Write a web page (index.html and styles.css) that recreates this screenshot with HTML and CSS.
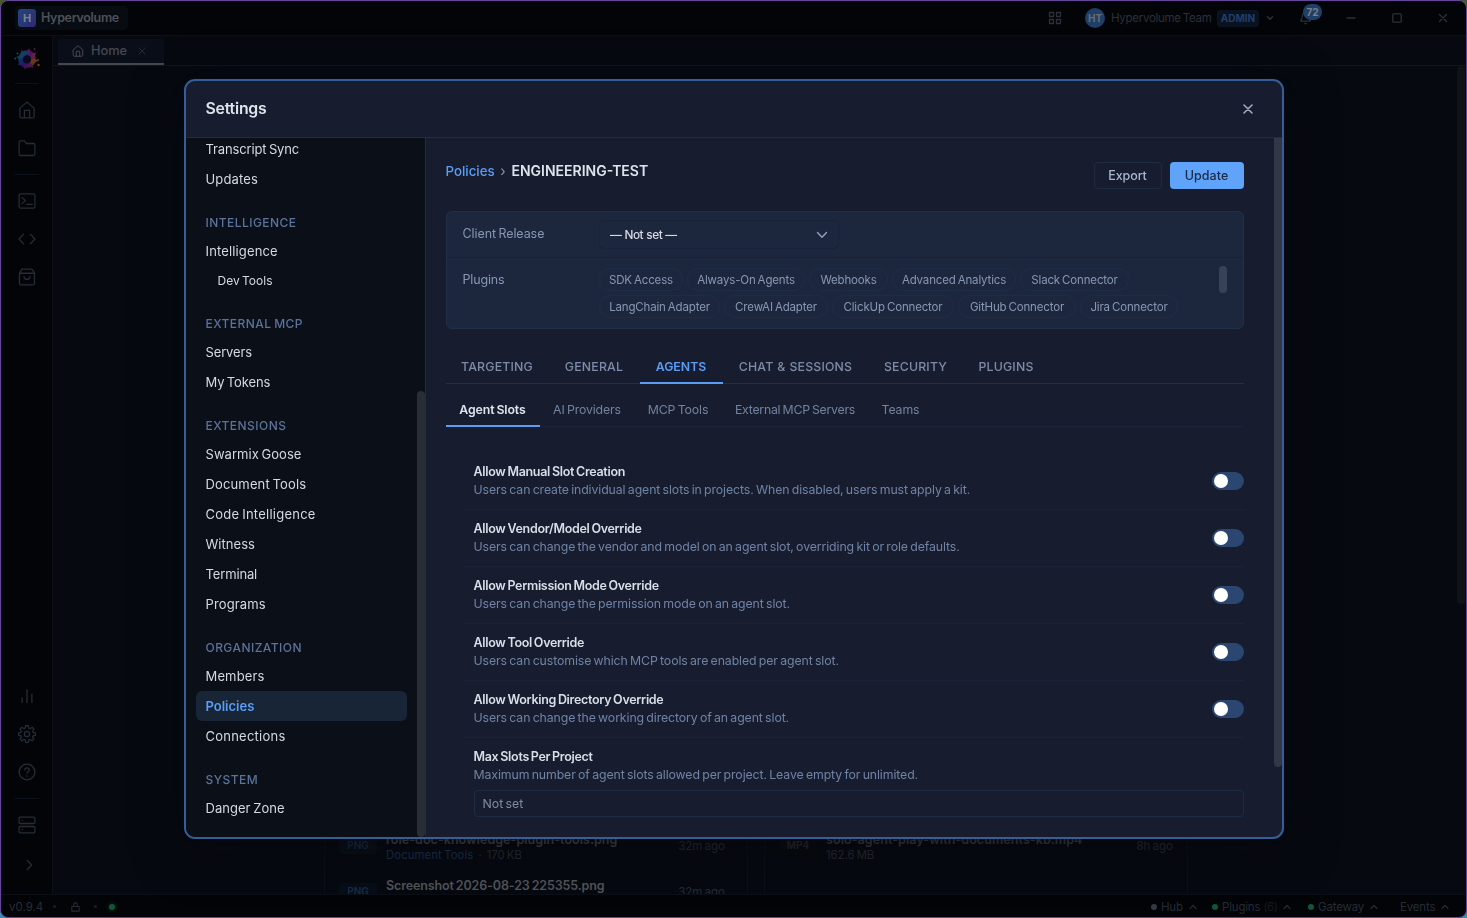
FILE: index.html
```html
<!DOCTYPE html>
<html lang="en">
<head>
<meta charset="utf-8">
<title>Hypervolume - Settings</title>
<link rel="stylesheet" href="styles.css">
</head>
<body>
<div class="window">
  <header class="titlebar">
    <div class="brand"><span class="brand-mark">H</span><span class="brand-name">Hypervolume</span></div>
    <div class="title-tools">
      <svg class="ic grid-ic" viewBox="0 0 14 14"><path d="M1.500 1.500h4v4h-4zM8.500 1.500h4v4h-4zM1.500 8.500h4v4h-4zM8.500 8.500h4v4h-4z"/></svg>
      <span class="avatar">HT</span>
      <span class="team">Hypervolume Team</span>
      <span class="admin">ADMIN</span>
      <svg class="ic chev-ic" viewBox="0 0 8 8"><path d="M1.500 2.800 4 5.200l2.500-2.400"/></svg>
      <span class="bell">
        <svg class="ic bell-ic" viewBox="0 0 24 24"><path d="M10.300 21a2 2 0 0 0 3.400 0M3.300 15.300A1 1 0 0 0 4 17h16a1 1 0 0 0 .7-1.700C19.400 14 18 12.500 18 8A6 6 0 0 0 6 8c0 4.500-1.400 6-2.700 7.300"/></svg>
        <span class="count">72</span>
      </span>
      <svg class="ic min-ic" viewBox="0 0 10 10"><path d="M1 5h8"/></svg>
      <svg class="ic max-ic" viewBox="0 0 10 10"><rect x=".8" y=".8" width="8.400" height="8.400" rx="1"/></svg>
      <svg class="ic close-ic" viewBox="0 0 10 10"><path d="m1.500 1.500 7 7M8.500 1.500l-7 7"/></svg>
    </div>
  </header>

  <div class="middle">
    <aside class="rail">
      <svg class="logo" viewBox="0 0 26 26">
        <defs><path id="blade" d="M16 9.500C11 10 6 9 7 3.500c1 1.500 2 1.500 4 1 3.500-1 7 1 8.500 5z"/></defs>
        <use href="#blade" fill="#3d1668"/>
        <use href="#blade" fill="#501660" transform="rotate(45 13 13)"/>
        <use href="#blade" fill="#621f40" transform="rotate(90 13 13)"/>
        <use href="#blade" fill="#6a3818" transform="rotate(135 13 13)"/>
        <use href="#blade" fill="#4c1648" transform="rotate(180 13 13)"/>
        <use href="#blade" fill="#34145e" transform="rotate(225 13 13)"/>
        <use href="#blade" fill="#152a64" transform="rotate(270 13 13)"/>
        <use href="#blade" fill="#10405c" transform="rotate(315 13 13)"/>
        <circle cx="13" cy="13.500" r="4" fill="#0a0828"/>
        <g fill="#125060"><circle cx="1.200" cy="12.500" r="1"/><circle cx="3.500" cy="7.500" r="1"/></g>
        <g fill="#7a4018"><circle cx="24" cy="14" r=".9"/><circle cx="24.500" cy="19" r="1.200"/></g>
        <circle cx="20.500" cy="3" r="1" fill="#5c1448"/>
      </svg>
      <hr class="rule r1">
      <svg class="ic ri home" viewBox="0 0 24 24"><path d="M2.500 9.500 12 1.500l9.500 8V20.500a2 2 0 0 1-2 2h-15a2 2 0 0 1-2-2zM8.500 22.500V12.500h7v10"/></svg>
      <svg class="ic ri folder" viewBox="0 0 24 24"><path d="M3.500 2.500h5l2.500 3.500h9.500a2 2 0 0 1 2 2v12a2 2 0 0 1-2 2h-17a2 2 0 0 1-2-2v-15.500a2 2 0 0 1 2-2z"/></svg>
      <hr class="rule r2">
      <svg class="ic ri term" viewBox="0 0 24 24"><rect x="1.500" y="2.500" width="21" height="19" rx="2"/><path d="m5.500 7.500 4.500 4-4.500 4M12 16.500h7"/></svg>
      <svg class="ic ri code" viewBox="0 0 24 24"><path d="m7.500 5.500-6 6.500 6 6.500M16.500 5.500l6 6.500-6 6.500"/></svg>
      <svg class="ic ri bag" viewBox="0 0 24 24"><path d="M5.500 1.500h13l3.500 5V20.500a2 2 0 0 1-2 2h-16a2 2 0 0 1-2-2V6.500zM2.500 7h19M8 11.500c.5 5 7.500 5 8 0"/></svg>
      <span class="spring"></span>
      <svg class="ic ri bars" viewBox="0 0 24 24"><path d="M5.500 20.500v-6M12 20.500V3.500M18.500 20.500V9.500"/></svg>
      <svg class="ic ri gear" viewBox="0 0 24 24"><circle cx="12" cy="12" r="3.500"/><path d="M10.200 1h3.600l.7 3.300 1.500.6 2.900-1.800 2.300 2.300-1.800 2.900.6 1.500 3.300.7v3.200l-3.300.7-.6 1.500 1.800 2.900-2.300 2.300-2.900-1.800-1.500.6-.7 3.300h-3.600l-.7-3.300-1.500-.6-2.900 1.800-2.300-2.300 1.800-2.900-.6-1.500L.7 13.600v-3.200L4 9.800l.6-1.500-1.800-2.900 2.300-2.300L8 4.900l1.500-.6z"/></svg>
      <svg class="ic ri help" viewBox="0 0 24 24"><circle cx="12" cy="12" r="10.500"/><path d="M9 9.300c.3-4 6.500-3.500 6 .3-.3 2-3 2-3 4M12 17.300v.4"/></svg>
      <hr class="rule r3">
      <svg class="ic ri server" viewBox="0 0 24 24"><rect x="1.500" y="1.500" width="21" height="8.500" rx="1.500"/><rect x="1.500" y="14" width="21" height="8.500" rx="1.500"/><path d="M5.500 5.800h.3M5.500 18.200h.3"/></svg>
      <svg class="ic ri more" viewBox="0 0 24 24"><path d="m12.500 6 5.500 6-5.500 6"/></svg>
    </aside>

    <div class="work">
      <div class="tabbar">
        <div class="tab">
          <svg class="ic tab-home" viewBox="0 0 24 24"><path d="M2.500 9.500 12 1.500l9.500 8V20.500a2 2 0 0 1-2 2h-15a2 2 0 0 1-2-2zM8.500 22.500V12.500h7v10"/></svg>
          <span>Home</span>
          <svg class="ic tab-x" viewBox="0 0 8 8"><path d="m.8.8 6.400 6.400M7.200.8.8 7.200"/></svg>
        </div>
      </div>
      <main class="page">
        <div class="panels">
          <section class="panel">
            <div class="file"><span class="kind">PNG</span><div class="meta"><b>role-doc-knowledge-plugin-tools.png</b><small><i>Document Tools</i><em>·</em>170 KB</small></div><time>32m ago</time></div>
            <div class="file"><span class="kind">PNG</span><div class="meta"><b class="shot">Screenshot 2026-08-23 225355.png</b><small>&nbsp;</small></div><time>32m ago</time></div>
          </section>
          <section class="panel recent">
            <div class="file"><span class="kind mp4">MP4</span><div class="meta"><b class="dim">solo-agent-play-with-documents-kb.mp4</b><small>162.6 MB</small></div><time>8h ago</time></div>
            <div class="file"></div>
          </section>
        </div>
        <span class="page-thumb"></span>
      </main>
    </div>
  </div>

  <footer class="status">
    <span class="ver">v0.9.4</span><span class="sep"></span>
    <svg class="ic lock" viewBox="0 0 12 12"><path d="M2 5.500h8v5H2zM4 5.500V3.500a2 2 0 0 1 4 0v2"/></svg>
    <span class="sep"></span><span class="dot ok live"></span>
    <div class="stats">
      <span class="stat"><span class="dot"></span>Hub<svg class="ic up" viewBox="0 0 8 6"><path d="M1 4.500 4 1.500l3 3"/></svg></span>
      <span class="stat"><span class="dot ok"></span>Plugins <u>(6)</u><svg class="ic up" viewBox="0 0 8 6"><path d="M1 4.500 4 1.500l3 3"/></svg></span>
      <span class="stat"><span class="dot ok"></span>Gateway<svg class="ic up" viewBox="0 0 8 6"><path d="M1 4.500 4 1.500l3 3"/></svg></span>
      <span class="stat">Events<svg class="ic up" viewBox="0 0 8 6"><path d="M1 4.500 4 1.500l3 3"/></svg></span>
    </div>
  </footer>
</div>

<div class="overlay">
  <div class="modal">
    <div class="modal-head"><h1>Settings</h1><svg class="ic modal-x" viewBox="0 0 10 10"><path d="m1 1 8 8M9 1 1 9"/></svg></div>
    <div class="modal-body">
      <nav class="nav">
        <a class="tight">Transcript Sync</a><a>Updates</a>
        <h2>INTELLIGENCE</h2><a>Intelligence</a><a class="child">Dev Tools</a>
        <h2>EXTERNAL MCP</h2><a class="tight">Servers</a><a class="tight">My Tokens</a>
        <h2>EXTENSIONS</h2><a class="snug">Swarmix Goose</a><a>Document Tools</a><a class="wide">Code Intelligence</a><a class="snug">Witness</a><a class="tight">Terminal</a><a>Programs</a>
        <h2>ORGANIZATION</h2><a>Members</a><a class="active">Policies</a><a class="wide">Connections</a>
        <h2>SYSTEM</h2><a class="snug">Danger Zone</a>
        <span class="nav-thumb"></span>
      </nav>
      <div class="content">
        <div class="crumbs">
          <div class="trail"><span class="link">Policies</span><span class="arrow">›</span><strong>ENGINEERING-TEST</strong></div>
          <button class="btn export">Export</button><button class="btn update">Update</button>
        </div>
        <div class="card">
          <div class="field"><label>Client Release</label><div class="select"><span>— Not set —</span><svg class="ic sel-ic" viewBox="0 0 12 12"><path d="m1.500 3.500 4.500 4.700 4.500-4.700"/></svg></div></div>
          <div class="field plugins"><label>Plugins</label>
            <div class="chips">
              <div class="chip-row one"><span>SDK Access</span><span>Always-On Agents</span><span>Webhooks</span><span>Advanced Analytics</span><span>Slack Connector</span></div>
              <div class="chip-row two"><span>LangChain Adapter</span><span>CrewAI Adapter</span><span>ClickUp Connector</span><span>GitHub Connector</span><span>Jira Connector</span></div>
            </div>
            <span class="chip-thumb"></span>
          </div>
        </div>
        <div class="tabs"><span>TARGETING</span><span>GENERAL</span><span class="on">AGENTS</span><span>CHAT &amp; SESSIONS</span><span>SECURITY</span><span>PLUGINS</span></div>
        <div class="subtabs"><span class="on">Agent Slots</span><span>AI Providers</span><span>MCP Tools</span><span class="long">External MCP Servers</span><span>Teams</span></div>
        <div class="rows">
          <div class="row"><div><h3>Allow Manual Slot Creation</h3><p>Users can create individual agent slots in projects. When disabled, users must apply a kit.</p></div><span class="toggle"></span></div>
          <div class="row"><div><h3>Allow Vendor/Model Override</h3><p>Users can change the vendor and model on an agent slot, overriding kit or role defaults.</p></div><span class="toggle"></span></div>
          <div class="row"><div><h3>Allow Permission Mode Override</h3><p>Users can change the permission mode on an agent slot.</p></div><span class="toggle"></span></div>
          <div class="row"><div><h3>Allow Tool Override</h3><p>Users can customise which MCP tools are enabled per agent slot.</p></div><span class="toggle"></span></div>
          <div class="row"><div><h3>Allow Working Directory Override</h3><p>Users can change the working directory of an agent slot.</p></div><span class="toggle"></span></div>
          <div class="row last"><h3>Max Slots Per Project</h3><p>Maximum number of agent slots allowed per project. Leave empty for unlimited.</p><div class="input">Not set</div></div>
        </div>
        <span class="content-thumb"></span>
      </div>
    </div>
  </div>
</div>
</body>
</html>
```
FILE: styles.css
```css
* { box-sizing: border-box; }
html, body { height: 100%; }
body {
  margin: 0;
  overflow: hidden;
  background: linear-gradient(#4a5636, #2f2440 30%, #3494a4);
  font-family: Inter, "Liberation Sans", sans-serif;
  font-size: 13px;
  color: #3c4048;
  word-spacing: -1px;
}
h1, h2, h3, p, hr { margin: 0; }
.ic { display: block; flex: none; fill: none; stroke: currentColor; stroke-linecap: round; stroke-linejoin: round; }

.window {
  height: 918px;
  border: 1px solid #66449a;
  border-radius: 8px;
  background: #030407;
  overflow: hidden;
  display: flex;
  flex-direction: column;
}

/* title bar */
.titlebar { height: 35px; flex: none; border-bottom: 1px solid #0a0f18; display: flex; align-items: center; justify-content: space-between; padding-left: 14px; }
.brand { display: flex; align-items: center; gap: 5px; width: 113px; height: 24px; padding-left: 3px; border-radius: 4px; background: #070b12; }
.brand-mark { width: 18px; height: 18px; border-radius: 3px; background: linear-gradient(135deg, #25457c, #2b2a73); color: #7f8289; font-size: 11px; font-weight: 700; line-height: 18px; text-align: center; }
.brand-name { font-weight: 600; font-size: 12.500px; line-height: 16px; margin-top: -1px; letter-spacing: -.32px; color: #4e5157; }
.title-tools { display: flex; align-items: center; color: #2b313a; }
.grid-ic { width: 14px; height: 14px; margin-right: 23px; stroke-width: 1.300; }
.avatar { width: 20px; height: 20px; border-radius: 50%; background: #203f68; color: #696c70; font-size: 10px; font-weight: 700; line-height: 20px; text-align: center; margin-right: 6px; }
.team { width: 106px; font-size: 11.500px; white-space: nowrap; letter-spacing: -.28px; }
.admin { width: 42px; height: 17px; border-radius: 3px; background: #091220; color: #203f6b; font-size: 10px; font-weight: 700; line-height: 17px; text-align: center; letter-spacing: 0; }
.chev-ic { width: 8px; height: 8px; margin-left: 7px; stroke-width: 1.500; }
.bell { position: relative; margin-left: 25px; color: #263140; }
.bell-ic { width: 13px; height: 15px; stroke-width: 2.200; }
.count { position: absolute; left: 4px; top: -7px; width: 19px; height: 16px; border-radius: 8px; background: #203f68; color: #7d7f82; font-size: 10px; font-weight: 700; line-height: 16px; text-align: center; }
.min-ic, .max-ic, .close-ic { width: 10px; height: 10px; stroke-width: 1.300; }
.min-ic { margin-left: 34px; }
.max-ic { margin-left: 36px; }
.close-ic { margin: 0 18px 0 36px; }

.middle { flex: 1; min-height: 0; display: flex; }

/* icon rail */
.rail { width: 52px; flex: none; border-right: 1px solid #0a0f18; display: flex; flex-direction: column; align-items: center; color: #252d37; }
.logo { width: 26px; height: 26px; margin-top: 10px; }
.rule { width: 24px; height: 1px; border: 0; background: #0b111b; }
.r1 { margin-top: 11px; }
.ri { width: 18px; height: 18px; stroke-width: 1.700; }
.home { margin-top: 17px; }
.folder { margin-top: 20px; }
.r2 { margin-top: 17px; }
.term { margin-top: 17px; }
.code, .bag, .gear, .help { margin-top: 20px; }
.spring { flex: 1; }
.r3 { margin-top: 17px; }
.server { margin-top: 17px; }
.more { margin-top: 22px; margin-bottom: 20px; }

/* work area */
.work { flex: 1; min-width: 0; display: flex; flex-direction: column; background: #060910; }
.tabbar { height: 30px; flex: none; border-bottom: 1px solid #0d1722; padding: 3px 0 0 5px; }
.tab { width: 106px; height: 26px; background: #090e18; border-bottom: 2px solid #44474c; display: flex; align-items: center; padding-left: 14px; color: #45494f; }
.tab span { width: 45px; padding-left: 7px; line-height: 16px; margin-top: -1px; font-size: 12.800px; font-weight: 500; }
.tab-home { width: 12px; height: 12px; stroke-width: 2; }
.tab-x { width: 8px; height: 8px; margin-left: 9px; stroke-width: 1; color: #272b31; }
.page { position: relative; flex: 1; min-height: 0; overflow: hidden; display: flex; align-items: flex-end; padding-left: 271px; }
.page-thumb { position: absolute; right: 1px; top: 0; width: 8px; height: 538px; border-radius: 4px; background: #101216; }
.panels { display: grid; grid-template-columns: 424px 424px; gap: 16px; margin-bottom: -21px; }
.panel { border: 1px solid #0b1017; border-top: 0; padding: 0 14px; }
.file { height: 46px; display: flex; align-items: center; }
.kind { width: 38px; height: 17px; margin-right: 9px; border-radius: 3px; background: #080e17; color: #172c49; font-size: 10px; font-weight: 600; line-height: 17px; text-align: center; }
.kind.mp4 { background: #080a0e; color: #262a31; }
.meta { flex: 1; padding-top: 3px; }
.meta b { display: block; color: #45484c; font-size: 12.500px; font-weight: 600; line-height: 17px; letter-spacing: .05px; white-space: nowrap; }
.meta b.dim { color: #3c3f43; letter-spacing: .08px; }
.meta b.shot { color: #525559; letter-spacing: -.13px; }
.meta small { display: block; font-size: 11.300px; line-height: 15px; color: #272c34; }
.meta i { font-style: normal; color: #1a3150; letter-spacing: .12px; }
.meta em { font-style: normal; margin: 0 5px; }
.file time { font-size: 11.500px; color: #272c34; padding: 2px 8px 0 0; }
.recent time { padding-right: 0; }

/* status bar */
.status { height: 23px; flex: none; border-top: 1px solid #0a0f18; display: flex; align-items: center; padding: 1px 15px 0 8px; color: #262c35; font-size: 11.500px; }
.ver { width: 44px; }
.sep { width: 3px; height: 3px; border-radius: 50%; background: #1a1e24; }
.lock { width: 11px; height: 12px; margin: 0 13px 0 14px; stroke-width: 1.100; }
.dot { width: 6px; height: 6px; flex: none; border-radius: 50%; background: #353941; margin-right: 4px; }
.dot.ok { background: #125638; }
.live { margin-left: 12px; box-shadow: 0 0 4px #0d3a28; }
.stats { margin-left: auto; display: grid; grid-template-columns: 61px 96px 92px 51px; }
.stat { display: flex; align-items: center; font-size: 11.500px; letter-spacing: -.18px; }
.stat u { text-decoration: none; color: #15191f; margin-left: 3px; letter-spacing: -.5px; }
.up { width: 8px; height: 6px; margin-left: 6px; stroke-width: 1.200; }

/* settings dialog */
.overlay { position: fixed; inset: 0; display: flex; align-items: center; justify-content: center; }
.modal {
  width: 1100px; height: 760px; overflow: hidden;
  border: 2px solid #365d96; border-radius: 11px;
  background: #171d2e;
  box-shadow: 0 10px 50px rgba(6, 8, 10, .6), 0 0 16px rgba(20, 40, 70, .15);
  display: flex; flex-direction: column;
}
.modal-head { height: 57px; flex: none; border-bottom: 1px solid #1f2d46; padding: 0 29px 0 20px; display: flex; align-items: center; justify-content: space-between; }
h1 { font-size: 15.800px; font-weight: 600; letter-spacing: -.2px; margin-top: -1px; color: #dfe4ec; }
.modal-x { width: 10px; height: 10px; color: #a3b0c6; stroke-width: 1.500; }
.modal-body { flex: 1; min-height: 0; display: flex; }

.nav { position: relative; width: 240px; flex: none; overflow: hidden; background: #0b0f17; border-right: 1px solid #1f2d46; padding: 0 18px 0 10px; }
.nav a { display: block; height: 30px; padding-left: 10px; border-radius: 6px; line-height: 30px; font-size: 13px; letter-spacing: .14px; color: #d5dae2; }
.nav a:first-child { margin-top: -4px; }
.nav a.tight { letter-spacing: -.14px; }
.nav a.snug { letter-spacing: .04px; }
.nav a.wide { letter-spacing: .24px; }
.nav a.child { height: 29px; line-height: 29px; padding-left: 22px; font-size: 12px; letter-spacing: 0; }
.nav a.active { background: #182536; color: #5a9df5; font-weight: 600; letter-spacing: 0; }
.nav h2 { height: 42px; padding: 19px 0 0 10px; line-height: 20px; font-size: 12px; font-weight: 500; letter-spacing: .45px; color: #5a739b; }
.nav-thumb { position: absolute; right: 0; top: 253px; width: 8px; bottom: 0; border-radius: 4px; background: #292d35; }

.content { position: relative; flex: 1; min-width: 0; overflow: hidden; padding: 24px 38px 0 20px; }
.content-thumb { position: absolute; right: 0; top: 0; width: 8px; height: 629px; border-radius: 0 0 4px 4px; background: #313746; }
.crumbs { display: flex; height: 27px; }
.trail { flex: 1; display: flex; height: 20px; line-height: 18px; font-size: 14px; }
.link { width: 49px; color: #5a9df5; font-size: 13.300px; font-weight: 500; }
.arrow { width: 17px; text-align: center; color: #8b98ae; }
.trail strong { font-size: 14px; font-weight: 600; color: #dfe4ec; }
.btn { height: 27px; padding: 0 0 1px; border-radius: 4px; font: 500 12.500px Inter, "Liberation Sans", sans-serif; letter-spacing: -.1px; }
.export { width: 68px; margin-right: 8px; border: 1px solid #1d2c45; background: transparent; color: #a9b6cf; }
.update { width: 74px; border: 0; background: #5fa3fb; color: #1b2a44; letter-spacing: .05px; }

.card { height: 118px; margin-top: 22px; border: 1px solid #20304a; border-radius: 6px; background: #1c273d; }
.field { position: relative; height: 46px; display: flex; padding: 8px 16px 0; border-bottom: 1px solid #17223a; }
.field.plugins { height: 70px; border-bottom: 0; padding-top: 10px; }
.field label { width: 136.500px; line-height: 27px; color: #8797b2; font-size: 12.500px; letter-spacing: -.08px; }
.plugins label { line-height: 24px; letter-spacing: -.15px; }
.select { width: 240px; height: 29px; border: 1px solid #17233a; border-radius: 5px; display: flex; align-items: center; justify-content: space-between; padding: 0 10px; color: #d5dae4; font-size: 11.800px; font-weight: 500; letter-spacing: -.45px; word-spacing: .4px; }
.sel-ic { width: 12px; height: 12px; color: #8fa0bc; stroke-width: 1.400; }
.chip-row { display: grid; column-gap: 4px; margin-bottom: 4px; }
.chip-row.one { grid-template-columns: 84px 118px 79px 124px 109px; }
.chip-row.two { grid-template-columns: 121px 104px 122px 118px 98px; }
.chip-row span { height: 23px; border: 1px solid #1e2d47; border-radius: 12px; text-align: center; line-height: 22px; font-size: 11.500px; color: #8797b2; white-space: nowrap; letter-spacing: -.16px; }
.chip-thumb { position: absolute; right: 16px; top: 8px; width: 8px; height: 27px; border-radius: 4px; background: #394159; }

.tabs { display: grid; grid-template-columns: 103px 91px 83px 146px 94px 87px; height: 34px; margin-top: 21px; border-bottom: 1px solid #20304a; }
.tabs span { height: 34px; text-align: center; line-height: 33px; font-size: 12.300px; font-weight: 500; letter-spacing: .2px; word-spacing: .4px; color: #7d8ca8; white-space: nowrap; }
.tabs .on { color: #5a9df5; font-weight: 600; border-bottom: 2px solid #5a9df5; letter-spacing: 0; }
.subtabs { display: grid; grid-template-columns: 94px 95px 87px 147px 64px; height: 43px; border-bottom: 1px solid #192339; }
.subtabs span { height: 43px; text-align: center; line-height: 51px; font-size: 12.300px; letter-spacing: -.12px; color: #7283a0; white-space: nowrap; }
.subtabs .long { letter-spacing: -.25px; }
.subtabs .on { border-bottom: 2px solid #5a9df5; color: #dfe4ec; font-weight: 600; letter-spacing: -.1px; }

.rows { padding: 26px 0 0 18px; }
.row { height: 57px; border-bottom: 1px solid #18233a; padding: 10px 0 0 10px; display: flex; justify-content: space-between; }
h3 { line-height: 18px; font-size: 12.500px; font-weight: 600; letter-spacing: -.3px; color: #d9dee8; }
p { line-height: 18px; font-size: 12.300px; letter-spacing: -.1px; color: #7083a5; }
.toggle { width: 32px; height: 18px; margin-top: 9px; padding: 2px; border-radius: 9px; background: #2b4670; }
.toggle::before { content: ""; display: block; width: 14px; height: 14px; border-radius: 50%; background: #fff; }
.row.last { display: block; height: auto; border: 0; }
.input { height: 27px; margin-top: 6px; border: 1px solid #1d2c45; border-radius: 4px; padding-left: 8px; line-height: 25px; font-size: 12.300px; color: #7f8ca5; }
```
